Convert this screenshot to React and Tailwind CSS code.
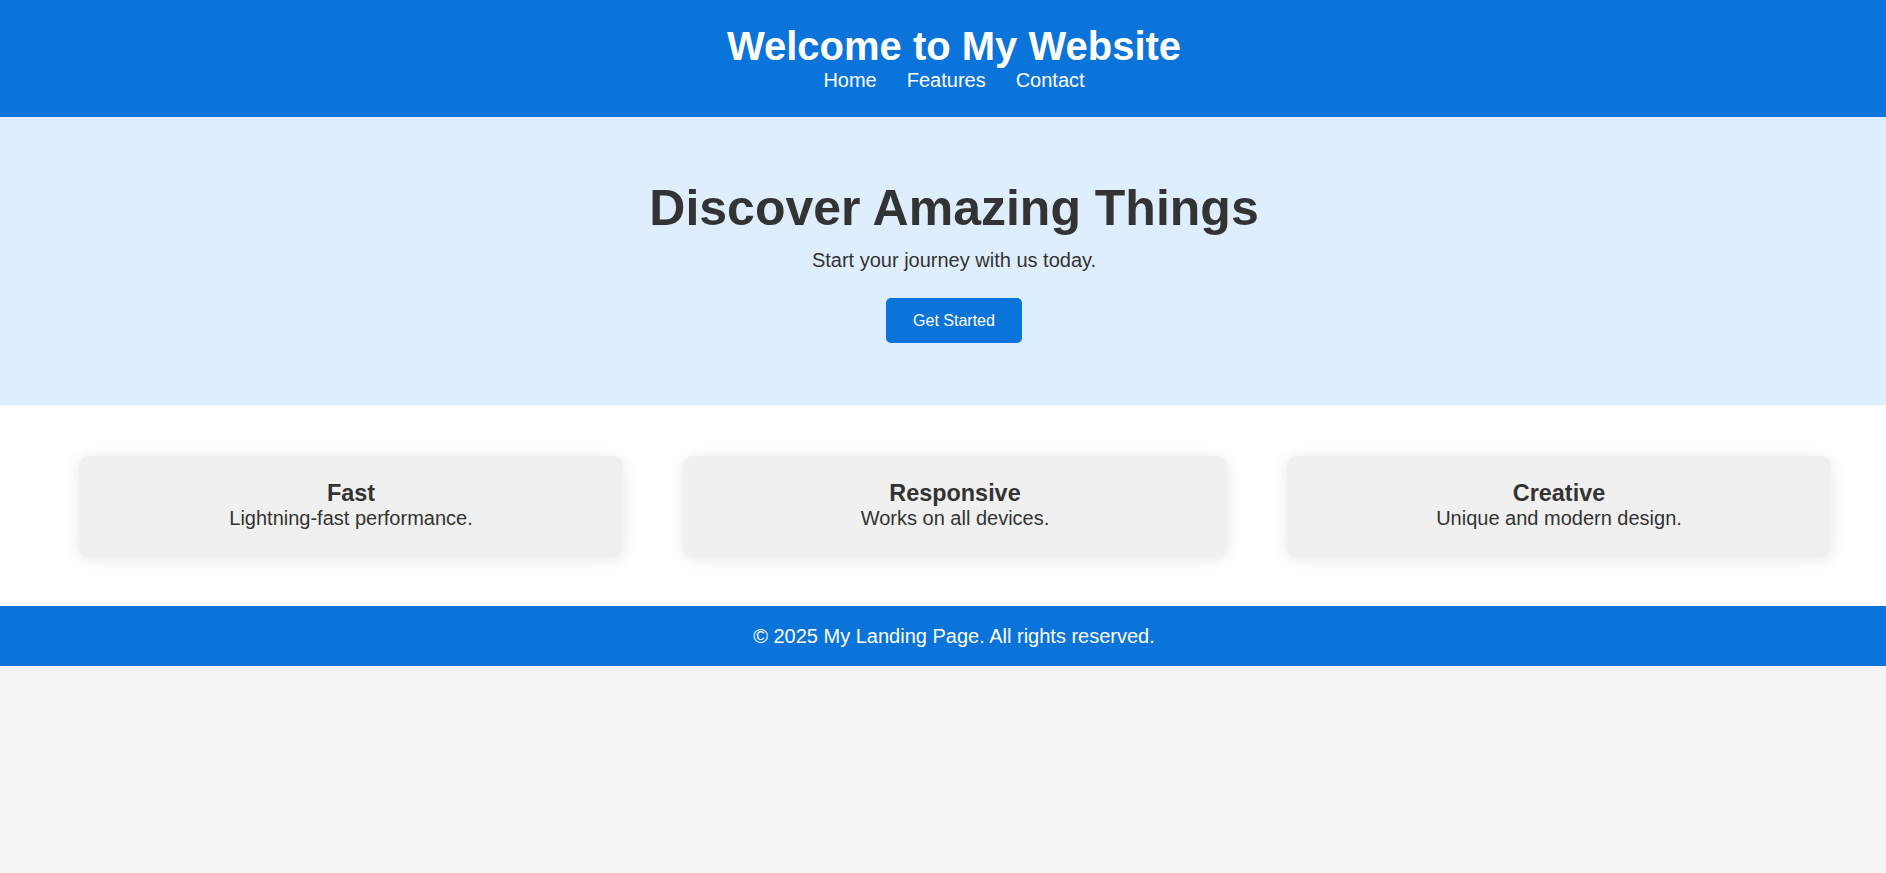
import React from 'react';

const features = [
    { title: 'Fast', text: 'Lightning-fast performance.' },
    { title: 'Responsive', text: 'Works on all devices.' },
    { title: 'Creative', text: 'Unique and modern design.' },
];

export default function App() {
    return (
        <div className="min-h-screen bg-[#f4f4f4] text-[#333] text-[20px] font-['Liberation_Sans',Arial,sans-serif]">
            {/* Header */}
            <header className="bg-[#0a74da] text-white text-center pt-[24px] pb-[25px] pl-[22px]">
                <h1 className="text-[40px] font-bold leading-[45px]">Welcome to My Website</h1>
                <nav className="flex justify-center gap-[30px] leading-[23px]">
                    <a href="#" className="text-white">Home</a>
                    <a href="#" className="text-white">Features</a>
                    <a href="#" className="text-white">Contact</a>
                </nav>
            </header>

            {/* Hero */}
            <section className="bg-[#dfeefe] text-center pt-[62px] pb-[62px] pl-[22px]">
                <h2 className="text-[50px] font-bold leading-[58px]">Discover Amazing Things</h2>
                <p className="mt-[12px] leading-[23px]">Start your journey with us today.</p>
                <button className="mt-[26px] h-[45px] px-[27px] rounded-[5px] bg-[#0a74da] text-white text-[16px] leading-[18px]">
                    Get Started
                </button>
            </section>

            {/* Features */}
            <section className="bg-white pt-[51px] pb-[49px] pl-[79px] pr-[55px]">
                <div className="grid grid-cols-3 gap-[60px]">
                    {features.map((f) => (
                        <div
                            key={f.title}
                            className="bg-[#f0f0f0] rounded-[10px] text-center pt-[24px] pb-[27px] shadow-[0_2px_15px_rgba(0,0,0,0.1)]"
                        >
                            <h3 className="text-[23.4px] font-bold leading-[27px]">{f.title}</h3>
                            <p className="leading-[23px]">{f.text}</p>
                        </div>
                    ))}
                </div>
            </section>

            {/* Footer */}
            <footer className="bg-[#0a74da] text-white text-center py-[18px] pl-[22px] leading-[24px]">
                © 2025 My Landing Page. All rights reserved.
            </footer>
        </div>
    );
}
